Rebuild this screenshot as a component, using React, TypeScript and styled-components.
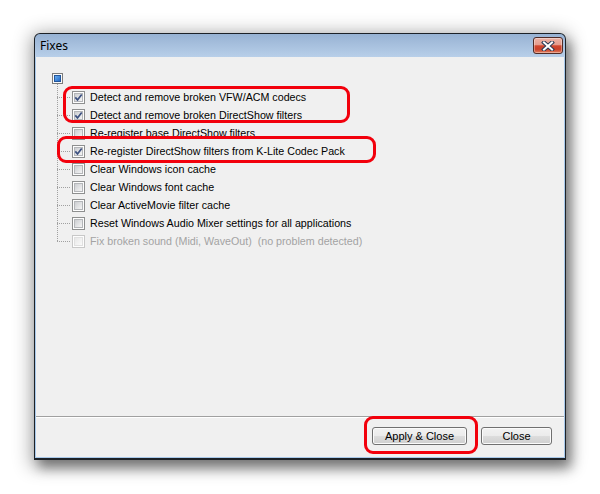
import React from "react";
import styled, { createGlobalStyle } from "styled-components";

const GlobalStyle = createGlobalStyle`
  html, body {
    margin: 0;
    background: #ffffff;
  }
  body {
    font-family: "Liberation Sans", Arial, sans-serif;
  }
`;

const Page = styled.div`
  width: 600px;
  height: 494px;
  box-sizing: border-box;
  padding: 33px 0 0 34px;
  overflow: hidden;
`;

const Window = styled.div`
  width: 532px;
  height: 427px;
  box-sizing: border-box;
  display: flex;
  flex-direction: column;
  border: 1px solid #1d2228;
  border-bottom-width: 2px;
  border-radius: 6px 6px 0 0;
  background: linear-gradient(to bottom, #97b2d3 0px, #b8cfe9 23px, #a9c9ea 24px, #a9c9ea 100%);
  box-shadow: 0 3px 18px 4px rgba(0, 0, 0, 0.3), 5px 8px 12px rgba(0, 0, 0, 0.38);
`;

const TitleBar = styled.div`
  height: 23px;
  flex-shrink: 0;
  display: flex;
  align-items: center;
  justify-content: space-between;
  padding: 0 2px 0 5px;
`;

const Title = styled.span`
  font-family: "Noto Sans", "Liberation Sans", sans-serif;
  font-size: 12px;
  color: #000;
  line-height: 1;
`;

const CloseX = styled.div`
  width: 30px;
  height: 17px;
  box-sizing: border-box;
  border: 1px solid #4f2b26;
  border-radius: 3px;
  display: flex;
  align-items: center;
  justify-content: center;
  background: linear-gradient(
    to bottom,
    #ecb3a7 0%,
    #e59c8d 45%,
    #d2462e 52%,
    #c8402a 75%,
    #e2805f 100%
  );
  box-shadow: inset 0 0 0 1px rgba(255, 255, 255, 0.35);
`;

const Client = styled.div`
  position: relative;
  flex: 1;
  margin: 0 1px 1px 1px;
  background: #f0f0f0;
  display: flex;
  flex-direction: column;
`;

const Tree = styled.div`
  flex: 1;
  padding-top: 11px;
  font-size: 10.7px;
`;

const RootRow = styled.div`
  height: 20px;
  padding-left: 16px;
  display: flex;
  align-items: center;
`;

const Children = styled.div`
  position: relative;
  padding-left: 36px;

  &::before {
    content: "";
    position: absolute;
    left: 21px;
    top: -4px;
    bottom: 9px;
    border-left: 1px dotted #a0a0a0;
  }
`;

const Item = styled.div<{ $disabled?: boolean }>`
  position: relative;
  height: 18px;
  display: flex;
  align-items: center;
  gap: 5px;
  color: ${(p) => (p.$disabled ? "#a3a3a3" : "#000")};
  white-space: pre;

  &::before {
    content: "";
    position: absolute;
    left: -15px;
    width: 13px;
    top: 9px;
    border-top: 1px dotted #a0a0a0;
  }
`;

const ButtonBar = styled.div`
  height: 41px;
  box-sizing: border-box;
  flex-shrink: 0;
  border-top: 1px solid #a0a0a0;
  box-shadow: inset 0 1px 0 #ffffff;
  display: flex;
  justify-content: flex-end;
  align-items: flex-start;
  gap: 14px;
  padding: 10px 12px 0 0;
`;

const Button = styled.button<{ $w: number }>`
  width: ${(p) => p.$w}px;
  height: 18px;
  box-sizing: border-box;
  padding: 0;
  border: 1px solid #707070;
  border-radius: 3px;
  font-family: "Liberation Sans", Arial, sans-serif;
  font-size: 11px;
  color: #000;
  background: linear-gradient(to bottom, #f2f2f2 0%, #ebebeb 50%, #dddddd 50%, #cfcfcf 100%);
  box-shadow: inset 0 0 0 1px #fbfbfb;
`;

const Highlight = styled.div<{ $x: number; $y: number; $w: number; $h: number }>`
  position: absolute;
  left: ${(p) => p.$x}px;
  top: ${(p) => p.$y}px;
  width: ${(p) => p.$w}px;
  height: ${(p) => p.$h}px;
  box-sizing: border-box;
  border: 3px solid #f2000c;
  border-radius: 9px;
  pointer-events: none;
`;

const CheckBox: React.FC<{ checked?: boolean; disabled?: boolean }> = ({ checked, disabled }) => (
  <svg width="13" height="13" viewBox="0 0 13 13" style={{ flexShrink: 0 }}>
    <defs>
      <linearGradient id="cbFill" x1="0" y1="0" x2="1" y2="1">
        <stop offset="0" stopColor="#c9cbcf" />
        <stop offset="1" stopColor="#f7f7f7" />
      </linearGradient>
      <linearGradient id="cbFillD" x1="0" y1="0" x2="1" y2="1">
        <stop offset="0" stopColor="#e6e6e6" />
        <stop offset="1" stopColor="#fbfbfb" />
      </linearGradient>
    </defs>
    <rect x="0.5" y="0.5" width="12" height="12" fill="#fdfdfd" stroke={disabled ? "#c8c8c8" : "#8e8f8f"} />
    <rect
      x="2.5"
      y="2.5"
      width="8"
      height="8"
      fill={disabled ? "url(#cbFillD)" : "url(#cbFill)"}
      stroke={disabled ? "#e0e0e0" : "#b4b6b9"}
    />
    {checked && (
      <path d="M3.3 6.4 L5.5 8.9 L9.7 3.4" fill="none" stroke="#3d5180" strokeWidth="1.7" />
    )}
  </svg>
);

const RootBox: React.FC = () => (
  <svg width="11" height="11" viewBox="0 0 11 11">
    <defs>
      <linearGradient id="rootFill" x1="0" y1="0" x2="1" y2="1">
        <stop offset="0" stopColor="#6fb4f4" />
        <stop offset="1" stopColor="#1c63c4" />
      </linearGradient>
    </defs>
    <rect x="0.5" y="0.5" width="10" height="10" fill="#fafafa" stroke="#7b7b7b" />
    <rect x="2.5" y="2.5" width="6" height="6" fill="url(#rootFill)" stroke="#23569a" />
  </svg>
);

const CloseGlyph: React.FC = () => (
  <svg width="14" height="10" viewBox="0 0 14 10">
    <path d="M3 1.5 L11 8.5 M11 1.5 L3 8.5" stroke="#2b3a55" strokeWidth="4" strokeLinecap="square" />
    <path d="M3 1.5 L11 8.5 M11 1.5 L3 8.5" stroke="#ffffff" strokeWidth="2" strokeLinecap="square" />
  </svg>
);

const fixes = [
  { label: "Detect and remove broken VFW/ACM codecs", checked: true },
  { label: "Detect and remove broken DirectShow filters", checked: true },
  { label: "Re-register base DirectShow filters" },
  { label: "Re-register DirectShow filters from K-Lite Codec Pack", checked: true },
  { label: "Clear Windows icon cache" },
  { label: "Clear Windows font cache" },
  { label: "Clear ActiveMovie filter cache" },
  { label: "Reset Windows Audio Mixer settings for all applications" },
  { label: "Fix broken sound (Midi, WaveOut)  (no problem detected)", disabled: true },
];

export default function App() {
  return (
    <>
      <GlobalStyle />
      <Page>
        <Window>
          <TitleBar>
            <Title>Fixes</Title>
            <CloseX>
              <CloseGlyph />
            </CloseX>
          </TitleBar>
          <Client>
            <Tree>
              <RootRow>
                <RootBox />
              </RootRow>
              <Children>
                {fixes.map((f) => (
                  <Item key={f.label} $disabled={f.disabled}>
                    <CheckBox checked={f.checked} disabled={f.disabled} />
                    {f.label}
                  </Item>
                ))}
              </Children>
            </Tree>
            <ButtonBar>
              <Button $w={95}>Apply &amp; Close</Button>
              <Button $w={71}>Close</Button>
            </ButtonBar>
            <Highlight $x={27} $y={29} $w={287} $h={37} />
            <Highlight $x={21} $y={79} $w={319} $h={27} />
            <Highlight $x={328} $y={359} $w={114} $h={38} />
          </Client>
        </Window>
      </Page>
    </>
  );
}
